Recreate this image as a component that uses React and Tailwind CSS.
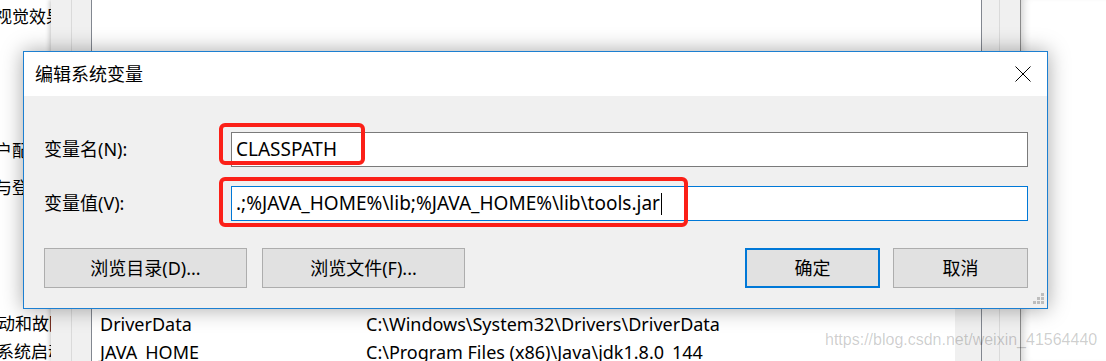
import React from 'react';

const CloseIcon = () => (
    <svg width="16" height="16" viewBox="0 0 16 16" fill="none" stroke="#000" strokeWidth="1">
        <path d="M0.5 0.5L15.5 15.5M15.5 0.5L0.5 15.5" />
    </svg>
);

const Grip = () => (
    <svg width="11" height="11" viewBox="0 0 11 11" fill="#bdbdbd">
        <rect x="8" y="0" width="3" height="3" />
        <rect x="4" y="4" width="3" height="3" />
        <rect x="8" y="4" width="3" height="3" />
        <rect x="0" y="8" width="3" height="3" />
        <rect x="4" y="8" width="3" height="3" />
        <rect x="8" y="8" width="3" height="3" />
    </svg>
);

const ListRow = ({ name, value }) => (
    <div className="flex h-[28px] shrink-0 items-center whitespace-nowrap text-[18px] text-black">
        <span className="w-[274px] shrink-0 pl-[8px]">{name}</span>
        <span>{value}</span>
    </div>
);

const SideText = ({ children, className }) => (
    <div className={`whitespace-nowrap text-[17px] leading-[24px] text-black ${className}`}>{children}</div>
);

const WinButton = ({ children, primary, className }) => (
    <button
        className={`flex h-[40px] items-center justify-center bg-[#e1e1e1] text-[18px] text-black ${
            primary ? 'border-2 border-[#0078d7]' : 'border border-[#adadad]'
        } ${className}`}
    >
        {children}
    </button>
);

const App = () => {
    return (
        <div className="relative flex h-[361px] w-[1106px] overflow-hidden bg-white font-['Noto_Sans','Noto_Sans_CJK_SC',sans-serif]">
            {/* system properties, behind everything */}
            <div className="flex w-[51px] shrink-0 flex-col overflow-hidden bg-white">
                <SideText className="ml-[-5px] mt-[5px]">视觉效果，处理器计划，内存使用，以及虚拟内存</SideText>
                <div className="mt-[98px] h-px w-full bg-[#dcdcdc]" />
                <SideText className="ml-[-22px] mt-[12px]">用户配置文件</SideText>
                <SideText className="ml-[-5px] mt-[13px]">与登录相关的桌面设置</SideText>
                <div className="mt-[96px] h-px w-full bg-[#dcdcdc]" />
                <SideText className="ml-[-19px] mt-[16px]">启动和故障恢复</SideText>
                <SideText className="ml-[-3px] mt-[4px]">系统启动、系统故障和调试信息</SideText>
            </div>

            {/* environment variables window */}
            <div className="flex w-[40px] shrink-0 bg-[#f0f0f0] shadow-[-2px_0_4px_rgba(0,0,0,0.18)]">
                <div className="w-[21px] border-r border-[#dadada]" />
            </div>
            <div className="flex w-[891px] shrink-0 flex-col border-x border-[#828790] bg-white">
                <div className="h-[250px] shrink-0 overflow-hidden">
                    <div className="mt-[-29px]">
                        <ListRow name="TEMP" value="C:\Users\Hong\AppData\Local\Temp" />
                    </div>
                </div>
                <div className="flex flex-1 overflow-hidden">
                    <div className="flex flex-1 flex-col pt-[60px]">
                        <ListRow name="DriverData" value="C:\Windows\System32\Drivers\DriverData" />
                        <ListRow name="JAVA_HOME" value="C:\Program Files (x86)\Java\jdk1.8.0_144" />
                    </div>
                    <div className="w-[26px] bg-[#f0f0f0]" />
                </div>
            </div>
            <div className="flex w-[39px] shrink-0 border-r border-[#8a8a8a] bg-[#f0f0f0]">
                <div className="w-[18px] border-r border-[#dadada]" />
            </div>
            <div className="flex-1 bg-white shadow-[inset_8px_0_8px_-6px_rgba(0,0,0,0.2)]" />

            {/* watermark */}
            <div className="absolute left-[825px] top-[329px] whitespace-nowrap font-['Liberation_Sans',sans-serif] text-[16px] leading-[22px] text-black/20">
                https://blog.csdn.net/weixin_41564440
            </div>

            {/* edit system variable dialog */}
            <div className="absolute left-[23px] top-[51px] flex h-[258px] w-[1025px] flex-col border border-[#1c7fd1] bg-[#f0f0f0] shadow-[0_0_20px_rgba(0,0,0,0.35)]">
                <div className="flex h-[44px] shrink-0 items-center justify-between bg-white pl-[11px] pr-[16px]">
                    <span className="text-[18px] text-black">编辑系统变量</span>
                    <CloseIcon />
                </div>
                <div className="flex flex-1 flex-col pl-[20px] pr-[19px] pt-[36px]">
                    <div className="flex h-[35px] items-center">
                        <span className="w-[187px] shrink-0 text-[18px] text-black">变量名(N):</span>
                        <div className="flex h-[35px] flex-1 items-center border border-[#7a7a7a] bg-white pl-[4px] text-[19px] text-black">
                            CLASSPATH
                        </div>
                    </div>
                    <div className="mt-[19px] flex h-[35px] items-center">
                        <span className="w-[187px] shrink-0 text-[18px] text-black">变量值(V):</span>
                        <div className="flex h-[35px] flex-1 items-center border border-[#0078d7] bg-white pl-[4px] text-[19px] text-black">
                            <span className="whitespace-nowrap">.;%JAVA_HOME%\lib;%JAVA_HOME%\lib\tools.jar</span>
                            <span className="ml-px inline-block h-[22px] w-px bg-black" />
                        </div>
                    </div>
                    <div className="mt-[27px] flex">
                        <WinButton className="w-[203px]">浏览目录(D)...</WinButton>
                        <WinButton className="ml-[15px] w-[203px]">浏览文件(F)...</WinButton>
                        <WinButton primary className="ml-auto w-[135px]">确定</WinButton>
                        <WinButton className="ml-[13px] w-[135px]">取消</WinButton>
                    </div>
                </div>
                <div className="absolute bottom-[4px] right-[3px]">
                    <Grip />
                </div>
            </div>

            {/* red annotation boxes */}
            <div className="absolute left-[219px] top-[123px] h-[42px] w-[146px] rounded-[6px] border-4 border-[#fb2018]" />
            <div className="absolute left-[219px] top-[177px] h-[50px] w-[469px] rounded-[6px] border-4 border-[#fb2018]" />
        </div>
    );
};

export default App;
